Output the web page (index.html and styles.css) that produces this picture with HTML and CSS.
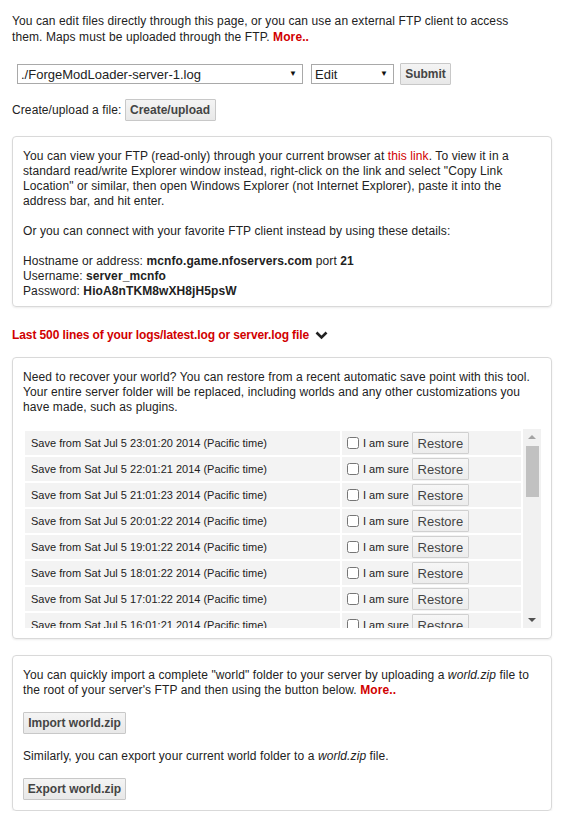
FILE: index.html
```html
<!DOCTYPE html>
<html>
<head>
<meta charset="utf-8">
<link rel="stylesheet" href="styles.css">
</head>
<body>
<p class="intro">You can edit files directly through this page, or you can use an external FTP client to access them. Maps must be uploaded through the FTP. <a class="more" href="#">More..</a></p>

<form class="file-row">
  <span class="select-wrap file-select"><select><option>./ForgeModLoader-server-1.log</option></select></span>
  <span class="select-wrap action-select"><select><option>Edit</option></select></span>
  <button type="button" class="btn submit">Submit</button>
</form>

<div class="create-row">Create/upload a file: <button type="button" class="btn create">Create/upload</button></div>

<div class="box ftp-box">
  <p>You can view your FTP (read-only) through your current browser at <a class="red" href="#">this link</a>. To view it in a standard read/write Explorer window instead, right-click on the link and select "Copy Link Location" or similar, then open Windows Explorer (not Internet Explorer), paste it into the address bar, and hit enter.</p>
  <p>Or you can connect with your favorite FTP client instead by using these details:</p>
  <p>Hostname or address: <b>mcnfo.game.nfoservers.com</b> port <b>21</b><br>Username: <b>server_mcnfo</b><br>Password: <b>HioA8nTKM8wXH8jH5psW</b></p>
</div>

<div class="log-toggle"><span class="log-title">Last 500 lines of your logs/latest.log or server.log file</span>
  <svg class="chevron" width="13" height="9" viewBox="0 0 13 9"><polyline points="1.5,1.5 6.5,6.5 11.5,1.5" fill="none" stroke="#222" stroke-width="2.6"/></svg>
</div>

<div class="box restore-box">
  <p>Need to recover your world? You can restore from a recent automatic save point with this tool. Your entire server folder will be replaced, including worlds and any other customizations you have made, such as plugins.</p>
  <div class="save-list">
    <div class="save-scroll">
      <table class="saves">
        <tr><td class="when">Save from Sat Jul 5 23:01:20 2014 (Pacific time)</td><td class="act"><label><input type="checkbox"> I am sure</label><button type="button" class="restore">Restore</button></td></tr>
        <tr><td class="when">Save from Sat Jul 5 22:01:21 2014 (Pacific time)</td><td class="act"><label><input type="checkbox"> I am sure</label><button type="button" class="restore">Restore</button></td></tr>
        <tr><td class="when">Save from Sat Jul 5 21:01:23 2014 (Pacific time)</td><td class="act"><label><input type="checkbox"> I am sure</label><button type="button" class="restore">Restore</button></td></tr>
        <tr><td class="when">Save from Sat Jul 5 20:01:22 2014 (Pacific time)</td><td class="act"><label><input type="checkbox"> I am sure</label><button type="button" class="restore">Restore</button></td></tr>
        <tr><td class="when">Save from Sat Jul 5 19:01:22 2014 (Pacific time)</td><td class="act"><label><input type="checkbox"> I am sure</label><button type="button" class="restore">Restore</button></td></tr>
        <tr><td class="when">Save from Sat Jul 5 18:01:22 2014 (Pacific time)</td><td class="act"><label><input type="checkbox"> I am sure</label><button type="button" class="restore">Restore</button></td></tr>
        <tr><td class="when">Save from Sat Jul 5 17:01:22 2014 (Pacific time)</td><td class="act"><label><input type="checkbox"> I am sure</label><button type="button" class="restore">Restore</button></td></tr>
        <tr><td class="when">Save from Sat Jul 5 16:01:21 2014 (Pacific time)</td><td class="act"><label><input type="checkbox"> I am sure</label><button type="button" class="restore">Restore</button></td></tr>
        <tr><td class="when">Save from Sat Jul 5 15:01:22 2014 (Pacific time)</td><td class="act"><label><input type="checkbox"> I am sure</label><button type="button" class="restore">Restore</button></td></tr>
      </table>
    </div>
    <div class="scrollbar">
      <span class="sb-up"></span>
      <span class="sb-thumb"></span>
      <span class="sb-track"></span>
      <span class="sb-down"></span>
    </div>
  </div>
</div>

<div class="box world-box">
  <p>You can quickly import a complete "world" folder to your server by uploading a <i>world.zip</i> file to the root of your server's FTP and then using the button below. <a class="more" href="#">More..</a></p>
  <button type="button" class="btn world-btn">Import world.zip</button>
  <p>Similarly, you can export your current world folder to a <i>world.zip</i> file.</p>
  <button type="button" class="btn world-btn">Export world.zip</button>
</div>
</body>
</html>
```

FILE: styles.css
```css
html, body {
  margin: 0;
  padding: 0;
  background: #fff;
}
body {
  padding: 0 13px 0 12px;
  font-family: "Liberation Sans", Arial, sans-serif;
  font-size: 12px;
  line-height: 15px;
  letter-spacing: 0.1px;
  color: #222;
}
p { margin: 0; }
a { text-decoration: none; }
.more {
  color: #d10000;
  font-weight: bold;
}
.red { color: #d10000; }

.intro {
  margin-top: 13px;
  line-height: 16px;
  max-width: 515px;
}

.file-row {
  display: flex;
  align-items: center;
  margin: 18px 0 0 5px;
}
.select-wrap {
  position: relative;
  display: block;
  height: 20px;
}
.select-wrap select {
  appearance: none;
  -webkit-appearance: none;
  box-sizing: border-box;
  width: 100%;
  height: 20px;
  margin: 0;
  padding: 0 0 0 3px;
  border: 1px solid #a9a9a9;
  border-radius: 0;
  background: #fff;
  font-family: "Liberation Sans", Arial, sans-serif;
  font-size: 13px;
  color: #222;
}
.select-wrap::after {
  content: "\25BC";
  position: absolute;
  right: 6px;
  top: 4px;
  font-size: 8px;
  line-height: 12px;
  color: #111;
  pointer-events: none;
}
.file-select { width: 286px; }
.action-select { width: 83px; margin-left: 8px; }

.btn {
  box-sizing: border-box;
  height: 22px;
  padding: 0 6px;
  border: 1px solid #c8c8c8;
  border-radius: 1px;
  background: linear-gradient(#f4f4f4, #e8e8e8);
  font-family: "Liberation Sans", Arial, sans-serif;
  font-size: 12px;
  font-weight: bold;
  color: #444;
  line-height: 20px;
}
.submit { margin-left: 6px; width: 51px; padding: 0; }

.create-row {
  display: flex;
  align-items: center;
  gap: 3px;
  margin-top: 14px;
}
.create { width: 91px; padding: 0; }

.box {
  margin-top: 15px;
  padding: 12px 10px 7px 10px;
  border: 1px solid #d9d9d9;
  border-radius: 4px;
  box-shadow: 0 1px 2px rgba(0,0,0,0.08);
}
.ftp-box p + p { margin-top: 15px; }

.log-toggle {
  display: flex;
  align-items: center;
  gap: 6px;
  margin-top: 21px;
}
.log-title {
  color: #d10000;
  font-weight: bold;
  letter-spacing: -0.1px;
}
.chevron { display: block; margin-top: -1px; }

.restore-box { margin-top: 14px; padding-bottom: 10px; }

.save-list {
  display: flex;
  margin-top: 14px;
  height: 199px;
}
.save-scroll {
  flex: 1;
  overflow: hidden;
}
.saves {
  width: 100%;
  border-spacing: 2px;
  border-collapse: separate;
}
.saves td {
  background: #f3f3f3;
  height: 24px;
  padding: 0;
  vertical-align: middle;
}
.when {
  padding-left: 6px !important;
  font-size: 11px;
  letter-spacing: 0;
  color: #222;
  width: 309px;
}
.act {
  padding-left: 5px !important;
  white-space: nowrap;
  font-size: 11px;
  letter-spacing: 0;
}
.act label {
  display: inline-flex;
  align-items: center;
  vertical-align: middle;
}
.act input {
  width: 12px;
  height: 12px;
  margin: 0 4px 0 0;
}
.restore {
  vertical-align: middle;
  box-sizing: border-box;
  height: 22px;
  width: 57px;
  margin-left: 3px;
  padding: 0;
  border: 1px solid #d0d0d0;
  border-radius: 1px;
  background: linear-gradient(#f6f6f6, #ececec);
  font-family: "Liberation Sans", Arial, sans-serif;
  font-size: 13px;
  color: #444;
}

.scrollbar {
  display: flex;
  flex-direction: column;
  align-items: center;
  width: 18px;
  background: #f1f1f1;
}
.sb-up, .sb-down {
  width: 0;
  height: 0;
  border-left: 4px solid transparent;
  border-right: 4px solid transparent;
}
.sb-up {
  margin-top: 6px;
  border-bottom: 4px solid #a3a3a3;
}
.sb-thumb {
  margin-top: 7px;
  width: 13px;
  height: 51px;
  background: #c1c1c1;
}
.sb-track { flex: 1; }
.sb-down {
  margin-bottom: 6px;
  border-top: 4px solid #505050;
}

.world-box { margin-top: 16px; padding-bottom: 10px; }
.world-btn {
  display: block;
  width: 103px;
  padding: 0;
  margin: 14px 0 15px;
}
.world-box .world-btn:last-child { margin-bottom: 0; }
```
